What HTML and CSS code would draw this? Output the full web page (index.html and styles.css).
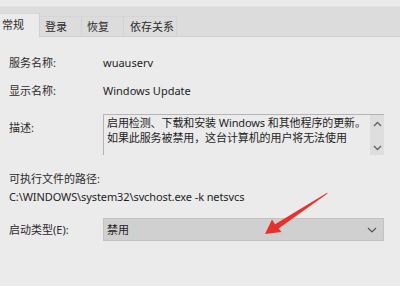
FILE: index.html
```html
<!DOCTYPE html>
<html>
<head>
<meta charset="utf-8">
<link rel="stylesheet" href="styles.css">
</head>
<body>
<div class="page">
  <div class="tabbar">
    <div class="tab active">常规</div>
    <div class="tab">登录</div>
    <div class="tab">恢复</div>
    <div class="tab wide">依存关系</div>
  </div>
  <div class="content">
    <div class="row r1"><span class="label">服务名称:</span><span class="value">wuauserv</span></div>
    <div class="row r2"><span class="label">显示名称:</span><span class="value">Windows Update</span></div>
    <div class="row r3">
      <span class="label desc-label">描述:</span>
      <div class="textbox">
        <div class="tb-text">启用检测、下载和安装 Windows 和其他程序的更新。<br>如果此服务被禁用，这台计算机的用户将无法使用</div>
        <div class="scrollbar">
          <svg width="9" height="6" viewBox="0 0 9 6"><path d="M1 5 L4.5 1.5 L8 5" fill="none" stroke="#606060" stroke-width="1.3"/></svg>
          <svg width="9" height="6" viewBox="0 0 9 6"><path d="M1 1 L4.5 4.5 L8 1" fill="none" stroke="#606060" stroke-width="1.3"/></svg>
        </div>
      </div>
    </div>
    <div class="exe-label">可执行文件的路径:</div>
    <div class="exe-path">C:\WINDOWS\system32\svchost.exe -k netsvcs</div>
    <div class="row r4">
      <span class="label">启动类型(E):</span>
      <div class="select">
        <span>禁用</span>
        <svg width="10" height="6" viewBox="0 0 10 6"><path d="M1 1 L5 5 L9 1" fill="none" stroke="#555" stroke-width="1.2"/></svg>
      </div>
    </div>
    <div class="bottom-line"></div>
  </div>
  <svg class="arrow" width="400" height="286" viewBox="0 0 400 286">
    <polygon fill="#e8302c" points="327.2,186.8 327.6,187.4 278.6,222.6 281.5,226.0 265,228 272.0,213.6 275.0,218.2"/>
  </svg>
</div>
</body>
</html>
```
FILE: styles.css
```css
html, body {
  margin: 0;
  padding: 0;
}
body {
  background: #ebebeb;
  font-family: "Noto Sans", "Noto Sans CJK SC", sans-serif;
  font-size: 11px;
  color: #1e1e1e;
  width: 400px;
  height: 286px;
  overflow: hidden;
}
.page {
  position: relative;
  width: 400px;
  height: 286px;
}
.tabbar {
  margin-top: 6px;
  height: 29px;
  background: #dcdcdc;
  border-bottom: 1px solid #d0d0d0;
  display: flex;
  align-items: flex-end;
  border-top: 1px solid #e2e2e2;
  box-sizing: content-box;
}
.tab {
  box-sizing: border-box;
  flex: none;
  width: 42px;
  height: 21px;
  padding: 0 0 0 5px;
  line-height: 20px;
  border-right: 1px solid #d2d2d2;
  border-top: 1px solid #d6d6d6;
  margin-bottom: -1px;
  color: #2a2a2a;
  white-space: nowrap;
  overflow: hidden;
}
.tab.wide {
  width: 53px;
  padding-left: 6px;
}
.tab.active {
  width: 43px;
  height: 24px;
  margin-left: -3px;
  background: #ebebeb;
  border-top: 1px solid #d8d8d8;
  border-right: 1px solid #d0d0d0;
  line-height: 21px;
  padding-left: 5px;
}
.content {
  padding: 0 16px 0 9px;
}
.row {
  display: grid;
  grid-template-columns: 94px 1fr;
  align-items: center;
  line-height: 16px;
}
.label {
  color: #2a2a2a;
}
.r1 { margin-top: 18px; }
.r2 { margin-top: 12px; }
.r3 {
  margin-top: 15px;
  align-items: start;
}
.desc-label {
  margin-top: 6px;
}
.textbox {
  box-sizing: border-box;
  height: 41px;
  border: 1px solid #b4b4b4;
  border-right: none;
  border-bottom: none;
  display: flex;
}
.tb-text {
  flex: 1;
  padding: 0 0 0 3px;
  line-height: 15px;
  white-space: nowrap;
  overflow: hidden;
  letter-spacing: -0.1px;
}
.scrollbar {
  width: 14px;
  background: #dedede;
  display: flex;
  flex-direction: column;
  justify-content: space-between;
  align-items: center;
  padding: 6px 0 4px;
}
.scrollbar svg {
  display: block;
}
.exe-label {
  margin-top: 16px;
  line-height: 16px;
  color: #2a2a2a;
}
.exe-path {
  margin-top: 2px;
  line-height: 16px;
  letter-spacing: -0.1px;
}
.r4 {
  margin-top: 13px;
}
.select {
  box-sizing: border-box;
  height: 23px;
  background: #d0d0d0;
  border: 1px solid #c2c2c2;
  display: flex;
  align-items: center;
  justify-content: space-between;
  padding: 0 6px 0 3px;
}
.select svg {
  display: block;
}
.bottom-line {
  margin-top: 45px;
  margin-right: 4px;
  height: 1px;
  background: #cdcdcd;
}
.arrow {
  position: absolute;
  left: 0;
  top: 0;
  pointer-events: none;
}
```
